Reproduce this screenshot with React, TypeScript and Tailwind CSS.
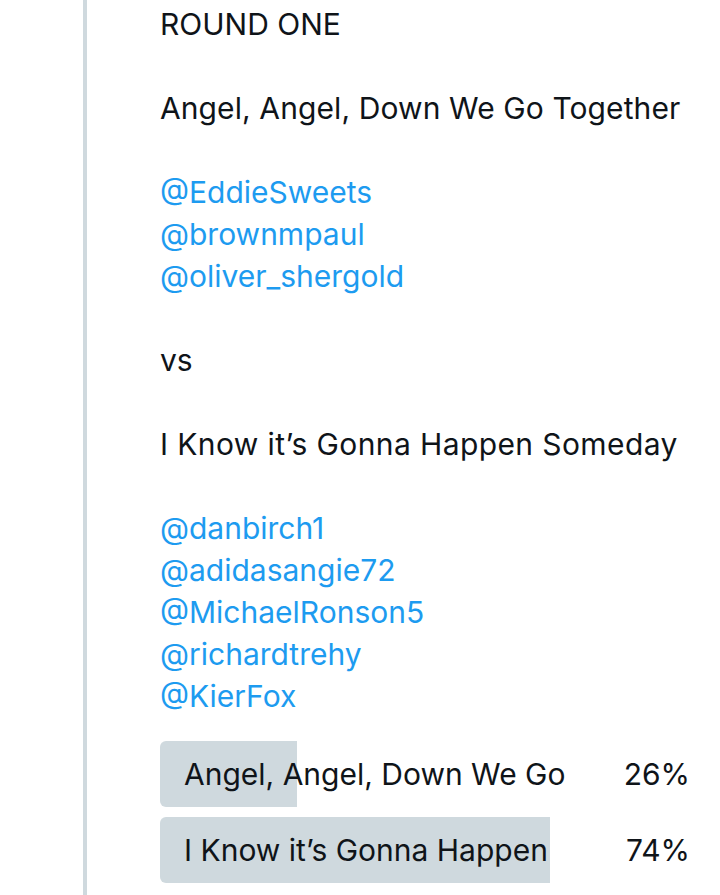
import React from 'react';

const handlesA = ['@EddieSweets', '@brownmpaul', '@oliver_shergold'];
const handlesB = ['@danbirch1', '@adidasangie72', '@MichaelRonson5', '@richardtrehy', '@KierFox'];

const options = [
  { label: 'Angel, Angel, Down We Go', pct: 26 },
  { label: 'I Know it\u2019s Gonna Happen', pct: 74 },
];

const App: React.FC = () => {
  return (
    <div className="flex min-h-[895px] h-[895px] overflow-hidden bg-white pl-[83px] font-['Inter',sans-serif] text-[#0f1419]">
      {/* thread line */}
      <div className="w-1 shrink-0 bg-[#cfd9de]"></div>

      <div className="ml-[73px] flex w-[527px] flex-col pt-[3px] text-[30px] leading-[42px]">
        <div>ROUND ONE</div>
        <div className="h-[42px]"></div>
        <div className="whitespace-nowrap tracking-[0.1px]">Angel, Angel, Down We Go Together</div>
        <div className="h-[42px]"></div>
        {handlesA.map((h) => (
          <div key={h} className="text-[#1d9bf0]">{h}</div>
        ))}
        <div className="h-[42px]"></div>
        <div>vs</div>
        <div className="h-[42px]"></div>
        <div className="whitespace-nowrap tracking-[0.4px]">I Know it&rsquo;s Gonna Happen Someday</div>
        <div className="h-[42px]"></div>
        {handlesB.map((h) => (
          <div key={h} className="text-[#1d9bf0]">{h}</div>
        ))}

        {/* Poll */}
        <div className="mt-6 flex flex-col gap-[10px]">
          {options.map((o) => (
            <div key={o.label} className="relative flex h-[66px] items-center justify-between">
              <div
                className="absolute left-0 top-0 h-full rounded-l-md bg-[#cfd9de]"
                style={{ width: `${o.pct}%` }}
              ></div>
              <span className="relative pl-6 whitespace-nowrap">{o.label}</span>
              <span className="relative -mr-[3px]">{o.pct}%</span>
            </div>
          ))}
        </div>
      </div>
    </div>
  );
};

export default App;
